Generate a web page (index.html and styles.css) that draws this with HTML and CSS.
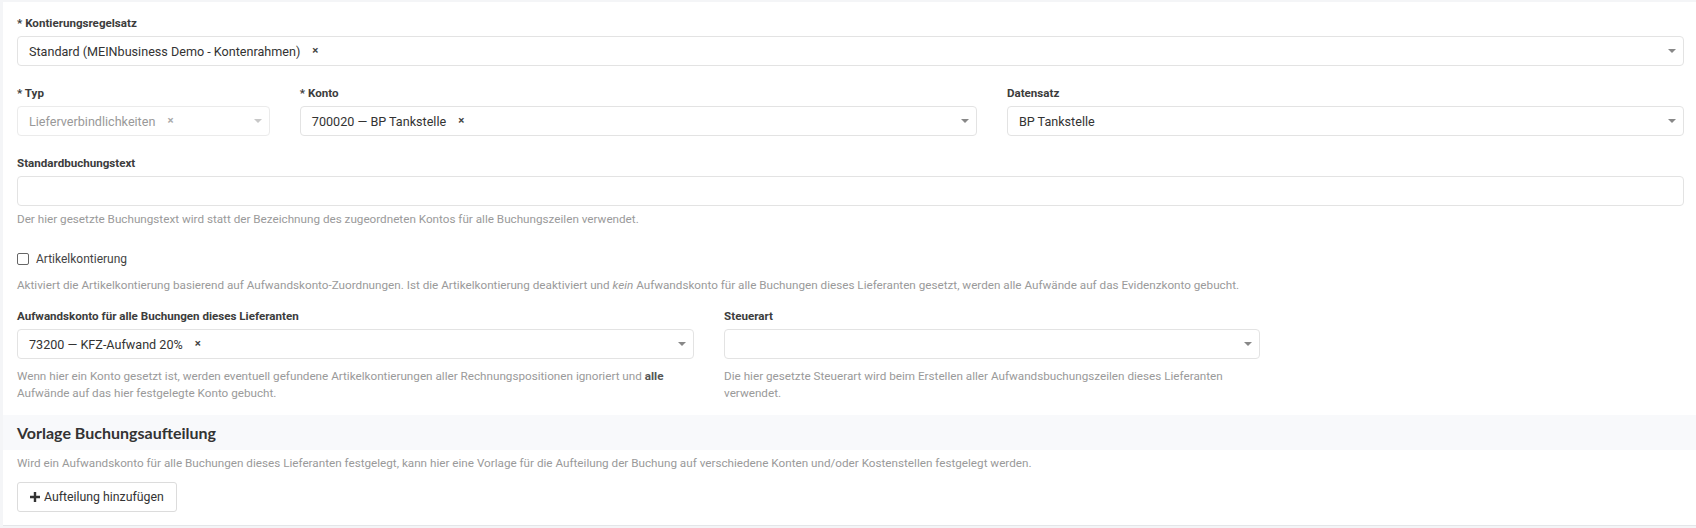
FILE: index.html
```html
<!DOCTYPE html>
<html lang="de">
<head>
<meta charset="utf-8">
<title>Kontierung</title>
<link rel="stylesheet" href="styles.css">
</head>
<body>
<div class="card">
  <div class="card-body">
    <div class="row">
      <div class="col col-12 fg">
        <label class="lbl">* Kontierungsregelsatz</label>
        <div class="select"><span class="val">Standard (MEINbusiness Demo - Kontenrahmen)</span><span class="clear">×</span><span class="arrow"></span></div>
      </div>
    </div>
    <div class="row">
      <div class="col col-2 fg">
        <label class="lbl">* Typ</label>
        <div class="select disabled"><span class="val">Lieferverbindlichkeiten</span><span class="clear">×</span><span class="arrow"></span></div>
      </div>
      <div class="col col-5 fg">
        <label class="lbl">* Konto</label>
        <div class="select"><span class="val">700020 — BP Tankstelle</span><span class="clear">×</span><span class="arrow"></span></div>
      </div>
      <div class="col col-5 fg">
        <label class="lbl">Datensatz</label>
        <div class="select"><span class="val">BP Tankstelle</span><span class="arrow"></span></div>
      </div>
    </div>
    <div class="row">
      <div class="col col-12 fg fg-help">
        <label class="lbl">Standardbuchungstext</label>
        <div class="input"></div>
        <p class="help help-first">Der hier gesetzte Buchungstext wird statt der Bezeichnung des zugeordneten Kontos für alle Buchungszeilen verwendet.</p>
      </div>
    </div>
    <div class="row">
      <div class="col col-12 fg fg-check">
        <label class="check"><span class="box"></span><span>Artikelkontierung</span></label>
        <p class="help help-check">Aktiviert die Artikelkontierung basierend auf Aufwandskonto-Zuordnungen. Ist die Artikelkontierung deaktiviert und <em>kein</em> Aufwandskonto für alle Buchungen dieses Lieferanten gesetzt, werden alle Aufwände auf das Evidenzkonto gebucht.</p>
      </div>
    </div>
    <div class="row">
      <div class="col col-5 fg fg-last">
        <label class="lbl">Aufwandskonto für alle Buchungen dieses Lieferanten</label>
        <div class="select"><span class="val">73200 — KFZ-Aufwand 20%</span><span class="clear">×</span><span class="arrow"></span></div>
        <p class="help help-low">Wenn hier ein Konto gesetzt ist, werden eventuell gefundene Artikelkontierungen aller Rechnungspositionen ignoriert und <strong>alle</strong> Aufwände auf das hier festgelegte Konto gebucht.</p>
      </div>
      <div class="col col-4 fg fg-last">
        <label class="lbl">Steuerart</label>
        <div class="select"><span class="val"></span><span class="arrow"></span></div>
        <p class="help help-low">Die hier gesetzte Steuerart wird beim Erstellen aller Aufwandsbuchungszeilen dieses Lieferanten verwendet.</p>
      </div>
    </div>
  </div>
  <div class="section-head">
    <h3>Vorlage Buchungsaufteilung</h3>
  </div>
  <div class="section-body">
    <p class="help">Wird ein Aufwandskonto für alle Buchungen dieses Lieferanten festgelegt, kann hier eine Vorlage für die Aufteilung der Buchung auf verschiedene Konten und/oder Kostenstellen festgelegt werden.</p>
    <button class="btn" type="button"><svg class="plus" viewBox="0 0 10 10" width="10" height="10"><path d="M3.8 0h2.4v3.8H10v2.4H6.2V10H3.8V6.2H0V3.8h3.8z" fill="#333"/></svg><span>Aufteilung hinzufügen</span></button>
  </div>
</div>
</body>
</html>
```

FILE: styles.css
```css
* {
  box-sizing: border-box;
}

html, body {
  margin: 0;
  padding: 0;
}

body {
  background: #f4f5f7;
  font-family: Roboto, "Liberation Sans", Arial, sans-serif;
  font-size: 13px;
  color: #333;
  height: 528px;
  overflow: hidden;
}

.card {
  margin: 2px 0 0 3px;
  background: #fff;
  border-bottom: 1px solid #e4e6e9;
}

.card-body {
  padding: 13px 12px 13px 14px;
}

.row {
  display: flex;
  margin: 0 -15px;
}

.col {
  padding: 0 15px;
}

.col-12 { width: 100%; }
.col-5 { width: 41.6667%; }
.col-4 { width: 33.3333%; }
.col-2 { width: 16.6667%; }

.fg {
  margin-bottom: 19px;
}

.fg-help {
  margin-bottom: 22px;
}

.fg-check {
  margin-bottom: 14px;
}

.fg-last {
  margin-bottom: 0;
}

.lbl {
  display: block;
  font-weight: 700;
  font-size: 11.6px;
  line-height: 17px;
  color: #3c3c3c;
  margin-bottom: 4px;
}

.select,
.input {
  position: relative;
  display: flex;
  align-items: center;
  height: 30px;
  border: 1px solid #e3e3e3;
  border-radius: 4px;
  background: #fff;
  padding: 0 28px 0 11px;
}

.val {
  font-size: 12.6px;
  color: #333;
  white-space: nowrap;
}

.clear {
  margin-left: 12px;
  font-size: 11.5px;
  font-weight: 700;
  color: #444;
  line-height: 1;
}

.arrow {
  position: absolute;
  right: 7px;
  top: 12px;
  width: 0;
  height: 0;
  border-left: 4px solid transparent;
  border-right: 4px solid transparent;
  border-top: 4px solid #888;
}

.select.disabled {
  border-color: #ebebeb;
}

.select.disabled .val {
  color: #999;
}

.select.disabled .clear {
  color: #aaa;
}

.select.disabled .arrow {
  border-top-color: #c8c8c8;
}

.help {
  margin: 3px 0 0;
  font-size: 11.7px;
  line-height: 17px;
  color: #9a9a9a;
}

.help-first {
  margin-top: 5px;
}

.help strong {
  color: #555;
  font-weight: 700;
}

.help-check {
  margin-top: 10px;
}

.help-low {
  margin-top: 9px;
}

.check {
  display: flex;
  align-items: center;
  height: 17px;
  font-size: 12px;
  color: #444;
}

.check .box {
  width: 12px;
  height: 12px;
  border: 1px solid #666;
  border-radius: 2px;
  margin-right: 7px;
  background: #fff;
}

.section-head {
  height: 35px;
  display: flex;
  align-items: center;
  background: #f8f9fb;
  padding: 0 14px;
}

.section-head h3 {
  margin: 0;
  font-family: Lato, "Open Sans", sans-serif;
  font-weight: 700;
  font-size: 16px;
  color: #333;
}

.section-body {
  padding: 5px 14px 13px;
}

.section-body .help {
  margin: 0;
}

.btn {
  margin-top: 10px;
  height: 30px;
  display: flex;
  align-items: center;
  gap: 4px;
  padding: 0 12px;
  background: #fff;
  border: 1px solid #dcdcdc;
  border-radius: 3px;
  font-family: Roboto, "Liberation Sans", Arial, sans-serif;
  font-size: 12.3px;
  color: #333;
}

.plus {
  display: block;
}
```
